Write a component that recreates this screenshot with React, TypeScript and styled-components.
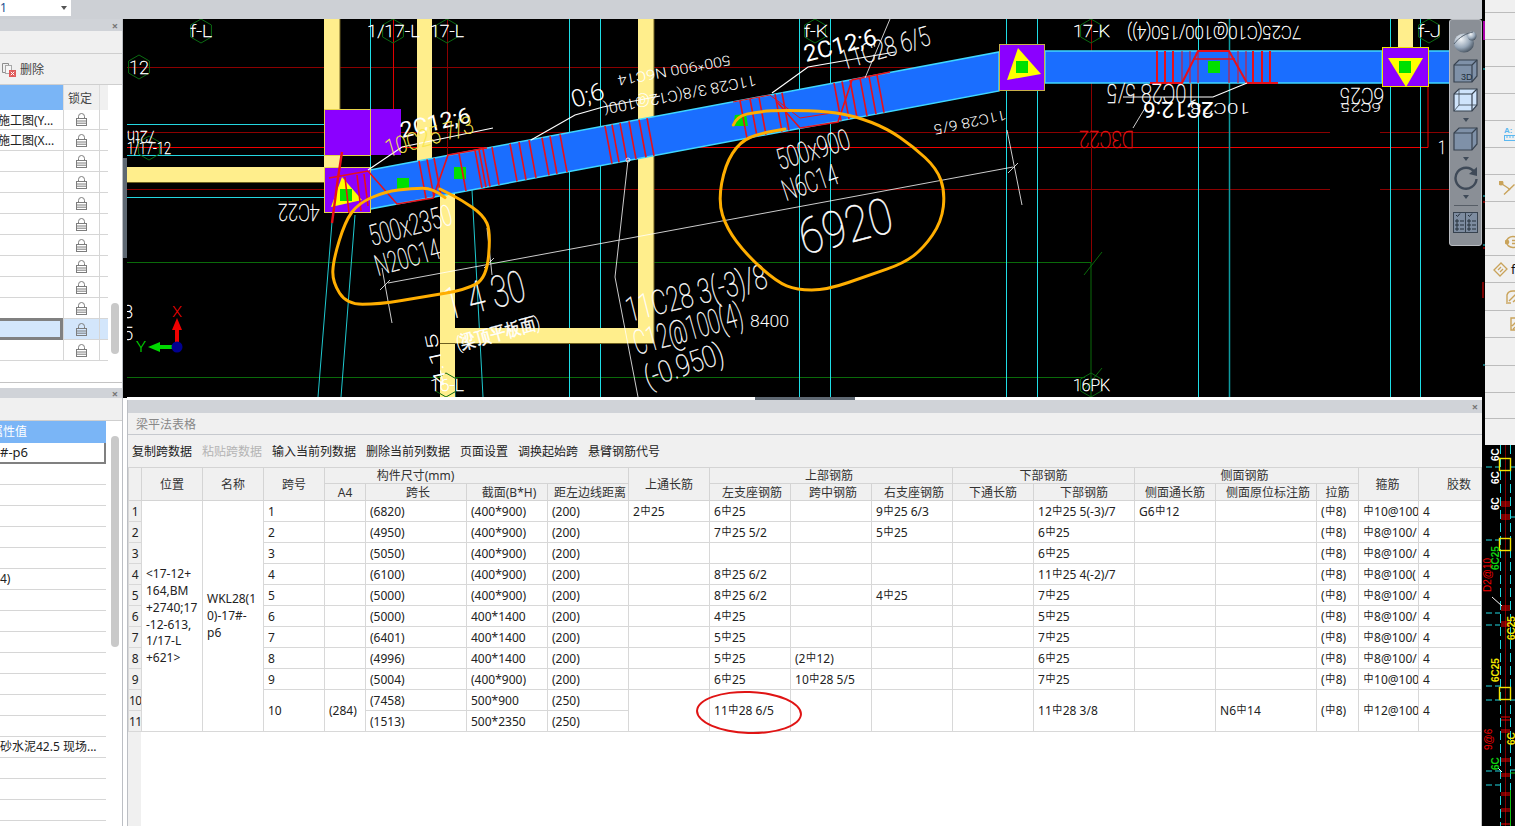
import React from "react";
import styled, { createGlobalStyle } from "styled-components";

const Global = createGlobalStyle`
  html, body { margin: 0; padding: 0; background: #fff; overflow: hidden; }
  * { box-sizing: border-box; }
`;

const FONT = `"Noto Sans", "Noto Sans CJK SC", sans-serif`;

/* ---------- page frame ---------- */
const Page = styled.div`
  display: flex; width: 1515px; height: 826px; overflow: hidden;
  font-family: ${FONT}; font-size: 12px; color: #222; background: #fff;
`;
const MainColumn = styled.div`display: flex; flex-direction: column; width: 1482px; flex: none;`;
const TopBar = styled.div`height: 19px; flex: none; background: #cdd0d5; display: flex; align-items: flex-start;`;
const LevelSelect = styled.div`
  width: 71px; height: 16px; background: #fff; color: #1d4f91; font-size: 12px; line-height: 14px;
  display: flex; justify-content: space-between; align-items: center; padding: 0 4px 0 0;
`;
const Caret = styled.span`
  width: 0; height: 0; border-left: 3px solid transparent; border-right: 3px solid transparent;
  border-top: 4px solid ${(p: { $c?: string }) => p.$c || "#555"};
`;
const Workspace = styled.div`display: flex; flex: 1; min-height: 0;`;

/* ---------- left side ---------- */
const Sidebar = styled.div`
  width: 123px; flex: none; display: flex; flex-direction: column; border-right: 1px solid #bcbfc4; background: #fff;
`;
const DockTitle = styled.div`
  height: ${(p: { $h: number }) => p.$h}px; flex: none; background: #d0d3d8;
  display: flex; justify-content: flex-end; align-items: center; padding-right: 4px;
  color: #777; font-size: 11px; font-weight: 700; line-height: 1;
`;
const Strip = styled.div`
  height: ${(p: { $h: number }) => p.$h}px; flex: none; background: #f0f0f0; border-bottom: 1px solid #cfcfcf;
  display: flex; align-items: center; gap: 4px; padding-left: 1px; color: #444;
`;
const PanelTop = styled.section`height: 364px; flex: none; display: flex; flex-direction: column; border-bottom: 1px solid #c4c4c4; position: relative;`;
const PanelBottom = styled.section`margin-top: 5px; flex: 1; display: flex; flex-direction: column; position: relative;`;
const LayerGrid = styled.div`display: grid; grid-template-columns: 63px 36px 9px; width: 108px;`;
const BlueHead = styled.div`
  background: #7ab5f6; color: #fff; height: 25px; overflow: hidden; white-space: nowrap; line-height: 22px;
`;
const GreyHead = styled.div`
  background: #f0f0f0; height: 25px; border-left: 1px solid #dcdcdc; display: flex; align-items: center; justify-content: center;
  color: #444; padding-right: 3px;
`;
const LayerName = styled.div<{ $sel?: boolean; $first?: boolean }>`
  height: ${(p) => (p.$first ? 20 : 21)}px; border-bottom: 1px solid #d6d6d6; white-space: nowrap; overflow: hidden;
  line-height: 21px; text-indent: -2px;
  ${(p) => p.$sel && "background:#d3e6fb; border:3px solid #808080; border-left:0; margin-top:-1px; height:22px;"}
`;
const LockCell = styled.div<{ $sel?: boolean; $first?: boolean }>`
  height: ${(p) => (p.$first ? 20 : 21)}px; border-bottom: 1px solid #d6d6d6; border-left: 1px solid #d6d6d6;
  display: flex; align-items: center; justify-content: center; padding-right: 1px; ${(p) => p.$sel && "background:#d3e6fb;"}
`;
const TailCell = styled.div<{ $sel?: boolean; $first?: boolean }>`
  height: ${(p) => (p.$first ? 20 : 21)}px; border-bottom: 1px solid #d6d6d6; border-left: 1px solid #d6d6d6;
  ${(p) => p.$sel && "background:#d3e6fb;"}
`;
const Thumb = styled.div<{ $top: number; $h: number }>`
  position: absolute; right: 3px; top: ${(p) => p.$top}px; height: ${(p) => p.$h}px; width: 8px; border-radius: 4px; background: #c9c9c9;
`;
const PropHead = styled.div`
  width: 106px; height: 22px; background: #7ab5f6; color: #fff; overflow: hidden; white-space: nowrap; line-height: 21px; font-size: 12px;
`;
const Clip = styled.span`display: inline-block; margin-left: ${(p: { $m: number }) => p.$m}px;`;
const PropRow = styled.div<{ $active?: boolean }>`
  width: 106px; height: 21px; border-bottom: 1px solid #d6d6d6; white-space: nowrap; overflow: hidden; line-height: 19px; background: #fff;
  ${(p) => p.$active && "border-bottom:2px solid #808080; border-right:2px solid #808080; font-size:13px;"}
`;

const Gutter = styled.div`width: 4px; flex: none; display: flex; flex-direction: column; background: #fff;`;
const GutterDark = styled.div`height: 379px; background: #000; padding-top: 139px;`;
const GutterHandle = styled.div`height: 100px; background: #5e6872;`;

/* ---------- centre ---------- */
const Center = styled.div`flex: 1; min-width: 0; display: flex; flex-direction: column;`;
const CanvasWrap = styled.div`position: relative; height: 378px; flex: none; background: #000; overflow: hidden;`;
const CadSvg = styled.svg`display: block;`;
const SplitRow = styled.div`height: 3px; flex: none; display: flex; justify-content: center; background: #fff;`;
const SplitHandle = styled.div`width: 100px; height: 3px; background: #5e6872;`;
const ViewBar = styled.div`
  position: absolute; right: 0; top: 0; width: 33px; height: 227px; background: #8a8f96; border: 1px solid #b9bcc1; border-radius: 3px;
  display: flex; flex-direction: column; align-items: center; padding-top: 10px;
`;
const ViewIcon = styled.svg<{ $mt?: number }>`display: block; flex: none; margin-top: ${(p) => p.$mt || 0}px;`;
const ViewCaret = styled.span<{ $mt: number }>`
  flex: none; margin-top: ${(p) => p.$mt}px; width: 0; height: 0;
  border-left: 3px solid transparent; border-right: 3px solid transparent; border-top: 4px solid #3f4a58;
`;
const ViewRule = styled.div`flex: none; width: 24px; height: 1px; background: #565d66; margin-top: 6px;`;

const TablePanel = styled.section`flex: 1; min-height: 0; display: flex; flex-direction: column; border-left: 1px solid #bcbfc4;`;
const PanelHeadBar = styled.div`
  height: 13px; flex: none; margin-top: 0; background: #d0d3d8; display: flex; justify-content: flex-end; align-items: center;
  padding-right: 4px; color: #777; font-size: 11px; font-weight: 700; line-height: 1;
`;
const PanelTitle = styled.div`
  height: 22px; flex: none; background: #f0f0f0; border-bottom: 1px solid #c6c9ce; color: #888; display: flex; align-items: center; padding-left: 8px; font-size: 12px;
`;
const ActionBar = styled.div`
  height: 32px; flex: none; background: #f0f0f0; display: flex; align-items: center; gap: 10px; padding: 0 0 0 4px;
`;
const Action = styled.span<{ $off?: boolean }>`color: ${(p) => (p.$off ? "#b4b4b4" : "#222")}; white-space: nowrap;`;
const TableArea = styled.div`
  position: relative; flex: 1; min-height: 0; overflow: hidden; border-right: 1px solid #c4c4c4;
  background: linear-gradient(to right, #f0f0f0 13px, #fff 13px);
`;
const Grid = styled.table`
  table-layout: fixed; border-collapse: collapse; width: 1353px; font-size: 12px;
`;
const Th = styled.th<{ $pl?: number; $pr?: number }>`
  background: #f0f0f0; border: 1px solid #d4d4d4; font-weight: 400; color: #333; text-align: center; white-space: nowrap; overflow: hidden;
  padding: 1px ${(p) => p.$pr || 0}px 0 ${(p) => p.$pl || 0}px; line-height: 14px;
`;
const Td = styled.td<{ $wrap?: boolean }>`
  background: #fff; border: 1px solid #d8d8d8; padding: 1px 0 0 4px; white-space: ${(p) => (p.$wrap ? "normal" : "nowrap")};
  overflow: hidden; line-height: ${(p) => (p.$wrap ? "16.8px" : "14px")}; height: 21px;
`;
const RowNo = styled.td`
  background: #f0f0f0; border: 1px solid #d8d8d8; padding: 1px 0 0; text-align: center; overflow: hidden; white-space: nowrap; letter-spacing: -0.5px; line-height: 14px; height: 21px;
`;
const HeadRow = styled.tr<{ $h: number }>`height: ${(p) => p.$h}px;`;
const Rebar = styled.span`font-size: 10px; position: relative; top: -2px; margin: 0 .5px; font-family: "Noto Sans CJK SC", sans-serif;`;
const RedRing = styled.div`
  position: absolute; left: 568px; top: 224px; width: 106px; height: 43px; border: 2.5px solid #e01414; border-radius: 50%; transform: rotate(2deg);
`;

/* ---------- right rail ---------- */
const Rail = styled.div`width: 33px; flex: none; display: flex; flex-direction: column; background: #000;`;
const RailTop = styled.div`height: 445px; flex: none; display: flex;`;
const RailEdge = styled.svg`display: block; width: 3px; height: 445px; flex: none;`;
const RailList = styled.div`flex: 1; background: #f0f0f0; overflow: hidden;`;
const RailRow = styled.div<{ $h: number; $indent: number }>`
  height: ${(p) => p.$h}px; border-bottom: 1px solid #bcbcbc; display: flex; align-items: center; gap: 3px;
  padding-left: ${(p) => p.$indent}px; white-space: nowrap; font-size: 13px; color: #111; overflow: hidden;
`;
const RailLast = styled.div`height: 27px;`;

const CadLabel = styled.text<{ $weight?: number }>`
  font-family: "Roboto", "Liberation Sans", sans-serif; font-weight: ${(p) => p.$weight || 100};
`;

/* ---------- small drawings ---------- */
const Lock = () => (
  <svg width="11" height="13" viewBox="0 0 11 13" fill="none" stroke="#7d7d7d">
    <path d="M2.5 5V3.5a3 3 0 0 1 6 0V5" />
    <rect x=".5" y="5.5" width="10" height="7" />
    <path d="M1 8h9M1 10.2h9" />
  </svg>
);
const DeleteIcon = () => (
  <svg width="15" height="15" viewBox="0 0 15 15" fill="none">
    <path d="M1.5 1.5h6v2M1.5 1.5v9h3" stroke="#8d8d8d" />
    <rect x="4.5" y="3.5" width="6" height="8" stroke="#a8a8a8" fill="#f6f6f6" />
    <rect x="8" y="8" width="7" height="7" fill="#e05a5a" />
    <path d="M9.8 9.8l3.4 3.4M13.2 9.8l-3.4 3.4" stroke="#fff" />
  </svg>
);

type P = [number, number];
const zp = (ox: number, oy: number, pts: P[]): P[] => pts.map(([x, y]) => [ox + x / 3, oy + y / 3] as P);
const smooth = (pts: P[]) => {
  let d = `M${pts[0][0]} ${pts[0][1]}`;
  for (let i = 1; i < pts.length - 1; i++) {
    const mx = (pts[i][0] + pts[i + 1][0]) / 2;
    const my = (pts[i][1] + pts[i + 1][1]) / 2;
    d += ` Q${pts[i][0]} ${pts[i][1]} ${mx} ${my}`;
  }
  const l = pts[pts.length - 1];
  return d + ` L${l[0]} ${l[1]}`;
};
const poly = (pts: P[]) => pts.map((p) => p.join(",")).join(" ");

const Lbl = ({ a, b, s, c = "#fff", w, children }: { a: P; b: P; s: number; c?: string; w?: number; children: React.ReactNode }) => {
  const dx = b[0] - a[0];
  const dy = b[1] - a[1];
  const deg = (Math.atan2(dy, dx) * 180) / Math.PI;
  return (
    <CadLabel
      x={a[0]}
      y={a[1]}
      fontSize={s}
      fill={c}
      stroke={w ? "none" : c}
      strokeWidth={w ? 0 : 0.4}
      $weight={w}
      transform={`rotate(${deg} ${a[0]} ${a[1]})`}
      textLength={Math.hypot(dx, dy)}
      lengthAdjust="spacingAndGlyphs"
    >
      {children}
    </CadLabel>
  );
};
const Hex = ({ x, y }: { x: number; y: number }) => {
  const pts: P[] = [];
  for (let i = 0; i < 6; i++) {
    const t = (Math.PI / 3) * i + Math.PI / 6;
    pts.push([x + 12 * Math.cos(t), y + 12 * Math.sin(t)]);
  }
  return <polygon points={poly(pts)} fill="none" stroke="#0b6b12" strokeWidth="1" />;
};
const beamTop = (x: number) => 170 - 0.1875 * (x - 370);
const TICKS = [422, 430, 437, 462, 478, 482, 486, 495, 513, 522, 532, 545, 553, 563, 608, 615, 623, 632, 642, 650, 743, 753, 762, 778, 785, 837, 845, 853, 863, 872, 880];
const RIGHT_TICKS = [1157, 1165, 1173, 1253, 1262, 1270];
const THIN_TICKS = [1182, 1190, 1198, 1229, 1238, 1246];

const ORANGE_A = smooth(zp(125, 15, [[960, 548], [925, 520], [860, 520], [780, 530], [700, 565], [660, 620], [625, 735], [622, 800], [665, 868], [760, 868], [900, 845], [1020, 825], [1085, 790], [1097, 650], [1075, 600], [1010, 555], [945, 522]]));
const ORANGE_B = smooth(zp(570, 15, [[490, 330], [500, 305], [560, 290], [650, 285], [780, 290], [860, 305], [950, 340], [1030, 395], [1100, 460], [1125, 530], [1115, 620], [1060, 700], [1000, 745], [900, 780], [770, 825], [680, 825], [620, 800], [530, 720], [470, 640], [445, 560], [465, 450], [510, 380], [570, 355], [645, 342]]));

const CadCanvas = () => (
  <CadSvg width="1355" height="378" viewBox="127 19 1355 378">
    {/* grid lines */}
    <g fill="none" strokeWidth="1">
      <path d="M127 67.5H1450M127 132.5H1330M1380 132.5H1450M127 189.5H1330M1380 189.5H1450" stroke="#8b0000" />
      <path d="M127 147.5H1428V87" stroke="#f00000" />
      <path d="M127 262.5H1091M127 377.5H1085M1091 262V397" stroke="#0a6a0a" />
      <path d="M1084 275L1102 252M1084 390L1102 368" stroke="#0a6a0a" />
      <path d="M393.5 19V147M447.5 19V397M1091.5 19V262" stroke="#8b0000" />
      <path d="M393.5 19V147" stroke="#e00000" />
      <path d="M127 124.5H325M127 155.5H325M127 197.5H325" stroke="#24d6e0" />
      <path d="M370.5 19V212M569.5 19V397M600.5 19V397M799.5 19V397M830.5 19V397M1006.5 19V397M1037.5 19V397M1198.5 19V397M1390.5 19V397M1420.5 19V397" stroke="#1fdde6" />
      <path d="M1229.5 19V397" stroke="#0f9a9f" strokeWidth="1.5" />
      <path d="M332 222L318 397M355 215L341 397M472 190L483 397M448 202L455 397" stroke="#1fc8cf" />
    </g>
    {/* yellow beams */}
    <g fill="#ffee8c">
      <rect x="324" y="19" width="16" height="150" />
      <rect x="417" y="19" width="15" height="145" />
      <rect x="127" y="167" width="198" height="15" />
      <rect x="440" y="190" width="15" height="207" />
      <rect x="440" y="328" width="214" height="15" />
      <rect x="638" y="19" width="16" height="324" />
      <rect x="1398" y="19" width="15" height="30" />
    </g>
    <path d="M127 182.5H325M440 343.5H654M654 19V343M340 19V110" stroke="#6c5f20" strokeWidth="1" fill="none" />
    {/* blue beams */}
    <g stroke="#3fd8ff" strokeWidth="1.5" fill="#1a6eff">
      <polygon points="370,170 999,52 999,91 370,209" />
      <rect x="1045" y="51" width="337" height="32" />
      <rect x="1428" y="51" width="30" height="32" />
    </g>
    {/* columns */}
    <rect x="324.5" y="109.5" width="46" height="46" fill="#8b00ff" stroke="#e6d24a" />
    <rect x="371" y="109" width="30" height="46" fill="#8b00ff" />
    <rect x="324.5" y="167.5" width="46" height="45" fill="#8b00ff" stroke="#e6d24a" />
    <rect x="999.5" y="44.5" width="45" height="46" fill="#8b00ff" stroke="#c9b04a" />
    <rect x="1382.5" y="47.5" width="46" height="39" fill="#8b00ff" stroke="#f3e200" />
    <g fill="#ffff00">
      <polygon points="342,177 362,200 331,207" />
      <polygon points="1018,48 1041,74 1007,80" />
      <polygon points="1388,58 1423,58 1406,87" />
    </g>
    <g fill="#00e000">
      <rect x="340" y="189" width="12" height="12" />
      <rect x="397" y="178" width="12" height="12" />
      <rect x="454" y="167" width="12" height="12" />
      <rect x="1016" y="61" width="12" height="12" />
      <rect x="1208" y="61" width="12" height="12" />
      <rect x="1399" y="61" width="12" height="12" />
      <polygon points="735,115 746,114 748,126 733,126" />
    </g>
    {/* rebar */}
    <g stroke="#e8101a" strokeWidth="1.6" fill="none">
      {TICKS.map((x) => (
        <line key={x} x1={x - 3} y1={beamTop(x - 3)} x2={x + 4} y2={beamTop(x + 4) + 39} />
      ))}
      <path d="M329 178L368 171L397 204L433 198L448 155L487 148" />
      <path d="M777 102L800 128L838 122L852 80L890 72" />
      <path d="M733 102L770 95L800 118L838 112" strokeWidth="1" />
      <path d="M342 152L338 178L332 223" strokeWidth="2.4" />
      <path d="M345 177L349 213M357 175L361 211M364 174L368 206" />
      {RIGHT_TICKS.map((x) => (
        <line key={x} x1={x} y1={51} x2={x} y2={83} strokeWidth="2" />
      ))}
      {THIN_TICKS.map((x) => (
        <line key={x} x1={x} y1={51} x2={x} y2={83} strokeWidth="1" />
      ))}
      <path d="M1150 83H1182L1198 51H1229L1247 83H1278" strokeWidth="2" />
      <path d="M1193 59H1235" />
    </g>
    {/* leaders */}
    <g fill="none" stroke="#fff" strokeWidth="1.2">
      <path d="M368 170L402 147L493 128" />
      <path d="M531 140L575 115L603 107L660 96" />
      <path d="M772 93L808 67L895 52" />
      <path d="M1123 97H1213L1247 83" />
      <g strokeWidth=".8">
        <path d="M388 283L1013 167" />
        <path d="M1007 130L1022 205M382 268L392 323M487 228L492 275" />
        <path d="M628 160L615 277L638 397" />
        <path d="M890 19L865 78M1133 128L1145 108" />
        <circle cx="628" cy="160" r="2" />
        <path d="M1008 173l10-10M380 290l10-10M484 268l10-10" />
      </g>
    </g>
    {/* labels */}
    <Hex x={201} y={31} /><Hex x={139} y={67} /><Hex x={393} y={31} /><Hex x={447} y={31} />
    <Hex x={815} y={31} /><Hex x={1091} y={31} /><Hex x={1429} y={31} /><Hex x={149} y={148} /><Hex x={446} y={385} /><Hex x={1091} y={385} />
    <Lbl a={[190, 37]} b={[212, 37]} s={17}>f-L</Lbl>
    <Lbl a={[129, 74]} b={[149, 74]} s={19}>12</Lbl>
    <Lbl a={[367, 37]} b={[420, 37]} s={17}>1/17-L</Lbl>
    <Lbl a={[430, 37]} b={[464, 37]} s={17}>17-L</Lbl>
    <Lbl a={[804, 37]} b={[828, 37]} s={17}>f-K</Lbl>
    <Lbl a={[1073, 37]} b={[1110, 37]} s={17}>17-K</Lbl>
    <Lbl a={[1418, 37]} b={[1441, 37]} s={17}>f-J</Lbl>
    <Lbl a={[1301, 26]} b={[1127, 26]} s={18}>7C25(C10@100/150(4))</Lbl>
    <Lbl a={[127, 154]} b={[171, 154]} s={17}>1/17-12</Lbl>
    <Lbl a={[156, 131]} b={[127, 131]} s={17}>72th</Lbl>
    <Lbl a={[320, 204]} b={[278, 204]} s={24}>4C22</Lbl>
    <Lbl a={[402, 138]} b={[472, 122]} s={22} w={400}>2C12;6</Lbl>
    <Lbl a={[388, 157]} b={[475, 132]} s={24} c="#f7e64a">10C25 7/3</Lbl>
    <Lbl a={[372, 246]} b={[454, 224]} s={29}>500x2350</Lbl>
    <Lbl a={[378, 276]} b={[442, 258]} s={29}>N20C14</Lbl>
    <Lbl a={[448, 320]} b={[528, 300]} s={44}>1 4 30</Lbl>
    <Lbl a={[458, 350]} b={[541, 328]} s={18}>(梁顶平板面)</Lbl>
    <Lbl a={[447, 385]} b={[436, 333]} s={16}>4.15</Lbl>
    <Lbl a={[430, 391]} b={[464, 391]} s={16}>16-L</Lbl>
    <Lbl a={[123, 318]} b={[133, 318]} s={18}>3</Lbl>
    <Lbl a={[123, 340]} b={[133, 340]} s={18}>5</Lbl>
    <Lbl a={[574, 108]} b={[606, 98]} s={24} w={300}>0;6</Lbl>
    <Lbl a={[730, 55]} b={[617, 76]} s={14} w={300}>500*900 N6C14</Lbl>
    <Lbl a={[755, 75]} b={[603, 104]} s={15} w={300}>11C28 3/8(C12@100(</Lbl>
    <Lbl a={[806, 62]} b={[878, 44]} s={23} w={400}>2C12;6</Lbl>
    <Lbl a={[843, 70]} b={[932, 44]} s={27}>11C28 6/5</Lbl>
    <Lbl a={[1005, 110]} b={[933, 125]} s={14} w={300}>11C28 6/5</Lbl>
    <Lbl a={[780, 170]} b={[852, 148]} s={29}>500x900</Lbl>
    <Lbl a={[786, 201]} b={[840, 183]} s={29}>N6C14</Lbl>
    <Lbl a={[804, 255]} b={[896, 231]} s={50}>6920</Lbl>
    <Lbl a={[629, 322]} b={[769, 287]} s={34}>11C28 3(-3)/8</Lbl>
    <Lbl a={[637, 355]} b={[745, 325]} s={34}>C12@100(4)</Lbl>
    <Lbl a={[750, 327]} b={[789, 327]} s={17} w={300}>8400</Lbl>
    <Lbl a={[648, 388]} b={[726, 362]} s={30}>(-0.950)</Lbl>
    <Lbl a={[1197, 84]} b={[1107, 84]} s={26}>10C28 5/5</Lbl>
    <Lbl a={[1250, 103]} b={[1190, 103]} s={14} w={300}>10C28</Lbl>
    <Lbl a={[1214, 102]} b={[1143, 102]} s={22} w={400}>2C12:6</Lbl>
    <Lbl a={[1134, 131]} b={[1079, 131]} s={24} c="#e81010">D3C22</Lbl>
    <Lbl a={[1384, 88]} b={[1340, 88]} s={22}>6C25</Lbl>
    <Lbl a={[1381, 103]} b={[1341, 103]} s={12} w={300}>6C25</Lbl>
    <Lbl a={[1438, 154]} b={[1446, 154]} s={18}>1</Lbl>
    <Lbl a={[1073, 391]} b={[1110, 391]} s={16}>16PK</Lbl>
    {/* axis */}
    <Lbl a={[172, 317]} b={[182, 317]} s={15} c="#f00000" w={300}>X</Lbl>
    <Lbl a={[136, 352]} b={[146, 352]} s={15} c="#00e000" w={300}>Y</Lbl>
    <rect x="175" y="328" width="4" height="19" fill="#f00000" />
    <polygon points="177,318 182,330 172,330" fill="#f00000" />
    <rect x="158" y="345" width="19" height="4" fill="#00d800" />
    <polygon points="148,347 160,342 160,352" fill="#00d800" />
    <circle cx="177" cy="347" r="5.5" fill="#000090" />
    {/* hand marks */}
    <g fill="none" stroke="#ffae00" strokeWidth="3" strokeLinecap="round">
      <path d={ORANGE_A} />
      <path d={ORANGE_B} />
    </g>
  </CadSvg>
);

/* ---------- view toolbar icons ---------- */
const Sphere = () => (
  <ViewIcon width="25" height="23" viewBox="0 0 25 23">
    <defs>
      <radialGradient id="sph" cx="35%" cy="30%" r="75%">
        <stop offset="0" stopColor="#f2f5f8" />
        <stop offset=".6" stopColor="#97a7b8" />
        <stop offset="1" stopColor="#46525f" />
      </radialGradient>
    </defs>
    <ellipse cx="11" cy="13" rx="10" ry="9.5" fill="url(#sph)" />
    <circle cx="19" cy="6" r="4.5" fill="url(#sph)" />
    <path d="M1 14C6 7 14 3 20 2" stroke="#56626f" fill="none" />
  </ViewIcon>
);
const Cube = ({ fill, wire, label, mt }: { fill: string; wire?: boolean; label?: boolean; mt: number }) => (
  <ViewIcon width="25" height="24" viewBox="0 0 25 24" $mt={mt}>
    <polygon points="6,1 24,1 24,17 19,23 1,23 1,6" fill={fill} stroke="#37424f" strokeWidth="1.2" />
    <path d="M1 6H19V23M19 6L24 1" stroke="#37424f" strokeWidth="1.2" fill="none" />
    {wire && <path d="M6 1V17H24M6 17L1 23" stroke="#37424f" strokeWidth=".8" fill="none" />}
    {label && (
      <text x="8" y="21" fontSize="9" fill="#22303d" fontFamily="Liberation Sans, sans-serif">
        3D
      </text>
    )}
  </ViewIcon>
);
const Rotate = () => (
  <ViewIcon width="24" height="24" viewBox="0 0 24 24" $mt={5}>
    <path d="M20.5 6A10.5 10.5 0 1 0 22.5 13" fill="none" stroke="#3f4a58" strokeWidth="2.4" />
    <polygon points="23,1 23,10 15,8" fill="#3f4a58" />
  </ViewIcon>
);
const CheckList = () => (
  <ViewIcon width="25" height="23" viewBox="0 0 25 23" $mt={4}>
    <rect x=".5" y="2.5" width="24" height="20" fill="#7d8ca0" stroke="#37424f" />
    <path d="M12.5 3V22" stroke="#37424f" />
    <g stroke="#26303b" fill="none">
      <path d="M3 5l1.5 1.5L7 3.5M15 5l1.5 1.5L19 3.5" />
      <path d="M3 10h2v2H3zM3 14h2v2H3zM3 18h2v2H3zM15 10h2v2h-2zM15 14h2v2h-2zM15 18h2v2h-2z" />
      <path d="M7 11h4M7 15h4M7 19h4M19 11h4M19 15h4M19 19h4" />
    </g>
  </ViewIcon>
);

/* ---------- rail icons ---------- */
const GOLD = "#c9a35a";
const RulerIcon = () => (
  <svg width="14" height="14" viewBox="0 0 14 14" fill="none" stroke="#5cb8f0" style={{ flex: "none" }}>
    <text x="0" y="6" fontSize="8" fontWeight="700" fill="#5cb8f0" stroke="none" fontFamily="Liberation Sans, sans-serif">A:</text>
    <rect x=".5" y="8.5" width="14" height="5" />
    <path d="M3 9v2M6 9v2M9 9v2M12 9v2" />
  </svg>
);
const AngleIcon = () => (
  <svg width="16" height="15" viewBox="0 0 16 15" fill="none" stroke={GOLD} strokeWidth="1.4" style={{ flex: "none" }}>
    <circle cx="2" cy="2" r="1.8" fill={GOLD} />
    <path d="M3 3L9 7M15.5 3.5L5 13.5" />
    <path d="M9 7L11 9" />
  </svg>
);
const StampIcon = () => (
  <svg width="14" height="14" viewBox="0 0 14 14" fill="none" stroke={GOLD} strokeWidth="1.5" style={{ flex: "none" }}>
    <ellipse cx="8" cy="7" rx="6.5" ry="5.5" />
    <circle cx="2" cy="7" r="1.6" fill={GOLD} />
    <path d="M7 5.5h5M7 8.5h5" />
  </svg>
);
const TagIcon = () => (
  <svg width="15" height="15" viewBox="0 0 15 15" fill="none" stroke={GOLD} strokeWidth="1.3" style={{ flex: "none" }}>
    <path d="M1 8L8 1L14 7L7 14Z" />
    <path d="M5 8L8 5M7 10L10 7" />
  </svg>
);
const HatchIcon = () => (
  <svg width="16" height="14" viewBox="0 0 16 14" fill="none" stroke={GOLD} strokeWidth="1.4" style={{ flex: "none" }}>
    <path d="M2 12V5Q3 1 8 1H16" />
    <path d="M4 11L13 2M8 12L16 5" />
    <path d="M1 13H6" />
  </svg>
);
const SheetIcon = () => (
  <svg width="8" height="14" viewBox="0 0 8 14" fill="none" stroke={GOLD} strokeWidth="1.4" style={{ flex: "none" }}>
    <path d="M8 1H1V13H8M2 9L7 4M3 12L8 8" />
  </svg>
);

const RailEdgeMarks = () => (
  <RailEdge viewBox="0 0 3 445">
    <rect width="3" height="445" fill="#000" />
    <path d="M2 21V40" stroke="#e000e0" strokeWidth="1.5" />
    <path d="M1 69H3M1 196H3M1 245H3" stroke="#22d8e0" />
    <path d="M1 202H3M1 248H3M1 282V298" stroke="#f00000" />
    <path d="M1 365H3" stroke="#22d8e0" />
  </RailEdge>
);

const RAIL_ROWS: { h: number; indent: number; icon?: React.ReactNode; text?: string }[] = [
  { h: 13, indent: 0 }, { h: 27, indent: 0 }, { h: 27, indent: 0 }, { h: 27, indent: 0 }, { h: 27, indent: 0 },
  { h: 27, indent: 19, icon: <RulerIcon /> },
  { h: 27, indent: 0 },
  { h: 27, indent: 14, icon: <AngleIcon /> },
  { h: 27, indent: 0 },
  { h: 27, indent: 20, icon: <StampIcon /> },
  { h: 27, indent: 8, icon: <TagIcon />, text: "f" },
  { h: 28, indent: 20, icon: <HatchIcon /> },
  { h: 27, indent: 25, icon: <SheetIcon /> },
  { h: 28, indent: 0 }, { h: 27, indent: 0 }, { h: 26, indent: 0 },
];

const RailCad = () => (
  <CadSvg width="33" height="381" viewBox="1482 445 33 381">
    <path d="M1505.5 445V826" stroke="#7a0000" />
    <path d="M1500.5 445V826M1510.5 445V826" stroke="#20d8e0" strokeDasharray="9 4" />
    <path d="M1486 467H1500M1486 540H1500M1486 613H1500M1486 625H1500M1486 686H1500M1486 700H1500M1486 771H1500M1486 785H1500M1510 467H1515M1510 517H1515M1510 700H1515M1510 770H1515" stroke="#20d8e0" strokeDasharray="6 3" />
    <g fill="none" stroke="#f2e400" strokeWidth="1.4">
      <rect x="1499.5" y="458.5" width="11" height="12" />
      <rect x="1499.5" y="538.5" width="11" height="12" />
      <rect x="1499.5" y="687.5" width="11" height="12" />
    </g>
    <path d="M1501 502H1510M1501 504H1510M1501 506H1510M1501 515H1510M1501 517H1510M1501 519H1510M1501 606H1510M1501 608H1510M1501 610H1510M1501 622H1510M1501 624H1510M1501 626H1510M1501 717H1510M1501 720H1510M1501 730H1510M1501 732H1510M1501 759H1510M1501 761H1510M1501 774H1510M1501 776H1510M1501 793H1510M1501 795H1510M1501 809H1510M1501 811H1510M1501 824H1510" stroke="#f00000" />
    <path d="M1492 597L1502 606M1498 768L1502 772" stroke="#fff" />
    <path d="M1510.5 790V826M1510 773H1515" stroke="#10c010" />
    <g fontFamily="Liberation Sans, sans-serif" fontSize="10">
      <text transform="rotate(-90 1491 592)" x="1491" y="592" fill="#f00000">D2@10</text>
      <text transform="rotate(-90 1492 750)" x="1492" y="750" fill="#f00000">9@6</text>
      <text transform="rotate(-90 1499 570)" x="1499" y="570" fill="#10d010" fontWeight="700">6C25</text>
      <text transform="rotate(-90 1499 682)" x="1499" y="682" fill="#f2e400" fontWeight="700">6C25</text>
      <text transform="rotate(-90 1499 770)" x="1499" y="770" fill="#10d010" fontWeight="700">6C</text>
      <text transform="rotate(-90 1499 461)" x="1499" y="461" fill="#fff" fontWeight="700">6C</text>
      <text transform="rotate(-90 1499 484)" x="1499" y="484" fill="#fff" fontWeight="700">6C</text>
      <text transform="rotate(-90 1499 510)" x="1499" y="510" fill="#fff" fontWeight="700">6C</text>
      <text transform="rotate(-90 1515 640)" x="1515" y="640" fill="#f2e400" fontWeight="700">6C25</text>
      <text transform="rotate(-90 1515 745)" x="1515" y="745" fill="#f2e400" fontWeight="700">6C</text>
    </g>
  </CadSvg>
);

/* ---------- table data ---------- */
const rich = (s: string) =>
  s.split("^").map((part, i) => (
    <React.Fragment key={i}>
      {i > 0 && <Rebar>中</Rebar>}
      {part}
    </React.Fragment>
  ));

const WIDTHS = [13, 61, 61, 61, 41, 101, 81, 81, 81, 81, 81, 81, 81, 101, 81, 101, 42, 60, 63];

const SPANS: string[][] = [
  ["1", "(6820)", "(400*900)", "(200)", "2^25", "6^25", "", "9^25 6/3", "", "12^25 5(-3)/7", "G6^12", "", "(^8)", "^10@100", "4"],
  ["2", "(4950)", "(400*900)", "(200)", "", "7^25 5/2", "", "5^25", "", "6^25", "", "", "(^8)", "^8@100/", "4"],
  ["3", "(5050)", "(400*900)", "(200)", "", "", "", "", "", "6^25", "", "", "(^8)", "^8@100/", "4"],
  ["4", "(6100)", "(400*900)", "(200)", "", "8^25 6/2", "", "", "", "11^25 4(-2)/7", "", "", "(^8)", "^8@100(", "4"],
  ["5", "(5000)", "(400*900)", "(200)", "", "8^25 6/2", "", "4^25", "", "7^25", "", "", "(^8)", "^8@100/", "4"],
  ["6", "(5000)", "400*1400", "(200)", "", "4^25", "", "", "", "5^25", "", "", "(^8)", "^8@100/", "4"],
  ["7", "(6401)", "400*1400", "(200)", "", "5^25", "", "", "", "7^25", "", "", "(^8)", "^8@100/", "4"],
  ["8", "(4996)", "400*1400", "(200)", "", "5^25", "(2^12)", "", "", "6^25", "", "", "(^8)", "^8@100/", "4"],
  ["9", "(5004)", "(400*900)", "(200)", "", "6^25", "10^28 5/5", "", "", "7^25", "", "", "(^8)", "^10@100", "4"],
];

const BeamTable = () => (
  <Grid>
    <colgroup>
      {WIDTHS.map((w, i) => (
        <col key={i} style={{ width: w }} />
      ))}
    </colgroup>
    <thead>
      <HeadRow $h={16}>
        <Th rowSpan={2} />
        <Th rowSpan={2}>位置</Th>
        <Th rowSpan={2}>名称</Th>
        <Th rowSpan={2}>跨号</Th>
        <Th colSpan={4} $pr={122}>构件尺寸(mm)</Th>
        <Th rowSpan={2}>上通长筋</Th>
        <Th colSpan={3} $pr={4}>上部钢筋</Th>
        <Th colSpan={2}>下部钢筋</Th>
        <Th colSpan={3} $pr={4}>侧面钢筋</Th>
        <Th rowSpan={2} $pr={2}>箍筋</Th>
        <Th rowSpan={2} $pl={18}>胶数</Th>
      </HeadRow>
      <HeadRow $h={17}>
        <Th>A4</Th>
        <Th $pl={4}>跨长</Th>
        <Th $pl={4}>截面(B*H)</Th>
        <Th $pl={4}>距左边线距离</Th>
        <Th $pl={4}>左支座钢筋</Th>
        <Th $pl={4}>跨中钢筋</Th>
        <Th $pl={4}>右支座钢筋</Th>
        <Th>下通长筋</Th>
        <Th>下部钢筋</Th>
        <Th>侧面通长筋</Th>
        <Th $pl={4}>侧面原位标注筋</Th>
        <Th>拉筋</Th>
      </HeadRow>
    </thead>
    <tbody>
      {SPANS.map((r, i) => (
        <tr key={r[0]}>
          <RowNo>{r[0]}</RowNo>
          {i === 0 && (
            <>
              <Td rowSpan={11} $wrap>
                &lt;17-12+<br />164,BM<br />+2740;17<br />-12-613,<br />1/17-L<br />+621&gt;
              </Td>
              <Td rowSpan={11} $wrap>
                WKL28(1<br />0)-17#-<br />p6
              </Td>
            </>
          )}
          <Td>{r[0]}</Td>
          <Td />
          <Td>{r[1]}</Td>
          <Td>{r[2]}</Td>
          <Td>{r[3]}</Td>
          {r.slice(4).map((v, k) => (
            <Td key={k}>{rich(v)}</Td>
          ))}
        </tr>
      ))}
      <tr>
        <RowNo>10</RowNo>
        <Td rowSpan={2}>10</Td>
        <Td rowSpan={2}>(284)</Td>
        <Td>(7458)</Td>
        <Td>500*900</Td>
        <Td>(250)</Td>
        <Td rowSpan={2} />
        <Td rowSpan={2}>{rich("11^28 6/5")}</Td>
        <Td rowSpan={2} />
        <Td rowSpan={2} />
        <Td rowSpan={2} />
        <Td rowSpan={2}>{rich("11^28 3/8")}</Td>
        <Td rowSpan={2} />
        <Td rowSpan={2}>{rich("N6^14")}</Td>
        <Td rowSpan={2}>{rich("(^8)")}</Td>
        <Td rowSpan={2}>{rich("^12@100")}</Td>
        <Td rowSpan={2}>4</Td>
      </tr>
      <tr>
        <RowNo>11</RowNo>
        <Td>(1513)</Td>
        <Td>500*2350</Td>
        <Td>(250)</Td>
      </tr>
    </tbody>
  </Grid>
);

const LAYERS = Array.from({ length: 12 }, (_, i) => (i === 0 ? "施工图(Y..." : i === 1 ? "施工图(X..." : ""));
const PROPS: Record<number, string> = { 5: "4)", 13: "砂水泥42.5  现场..." };

export default function App() {
  return (
    <Page>
      <Global />
      <MainColumn>
        <TopBar>
          <LevelSelect>
            <span>1</span>
            <Caret />
          </LevelSelect>
        </TopBar>
        <Workspace>
          <Sidebar>
            <PanelTop>
              <DockTitle $h={12}>×</DockTitle>
              <Strip $h={23} />
              <Strip $h={31}>
                <DeleteIcon />
                <span>删除</span>
              </Strip>
              <LayerGrid>
                <BlueHead />
                <GreyHead>锁定</GreyHead>
                <GreyHead />
                {LAYERS.map((n, i) => (
                  <React.Fragment key={i}>
                    <LayerName $sel={i === 10} $first={i === 0}>{n}</LayerName>
                    <LockCell $sel={i === 10} $first={i === 0}><Lock /></LockCell>
                    <TailCell $sel={i === 10} $first={i === 0} />
                  </React.Fragment>
                ))}
              </LayerGrid>
              <Thumb $top={284} $h={51} />
            </PanelTop>
            <PanelBottom>
              <DockTitle $h={10}>×</DockTitle>
              <Strip $h={23} />
              <PropHead><Clip $m={-9}>属性值</Clip></PropHead>
              <PropRow $active>#-p6</PropRow>
              {Array.from({ length: 18 }, (_, i) => (
                <PropRow key={i}>{PROPS[i] || ""}</PropRow>
              ))}
              <Thumb $top={48} $h={211} />
            </PanelBottom>
          </Sidebar>
          <Gutter>
            <GutterDark>
              <GutterHandle />
            </GutterDark>
          </Gutter>
          <Center>
            <CanvasWrap>
              <CadCanvas />
              <ViewBar>
                <Sphere />
                <Cube fill="#7f91a8" label mt={6} />
                <Cube fill="#cfe4fb" wire mt={5} />
                <ViewCaret $mt={6} />
                <Cube fill="#7f91a8" mt={5} />
                <ViewCaret $mt={6} />
                <Rotate />
                <ViewCaret $mt={5} />
                <ViewRule />
                <CheckList />
              </ViewBar>
            </CanvasWrap>
            <SplitRow>
              <SplitHandle />
            </SplitRow>
            <TablePanel>
              <PanelHeadBar>×</PanelHeadBar>
              <PanelTitle>梁平法表格</PanelTitle>
              <ActionBar>
                <Action>复制跨数据</Action>
                <Action $off>粘贴跨数据</Action>
                <Action>输入当前列数据</Action>
                <Action>删除当前列数据</Action>
                <Action>页面设置</Action>
                <Action>调换起始跨</Action>
                <Action>悬臂钢筋代号</Action>
              </ActionBar>
              <TableArea>
                <BeamTable />
                <RedRing />
              </TableArea>
            </TablePanel>
          </Center>
        </Workspace>
      </MainColumn>
      <Rail>
        <RailTop>
          <RailEdgeMarks />
          <RailList>
            {RAIL_ROWS.map((r, i) => (
              <RailRow key={i} $h={r.h} $indent={r.indent}>
                {r.icon}
                {r.text}
              </RailRow>
            ))}
            <RailLast />
          </RailList>
        </RailTop>
        <RailCad />
      </Rail>
    </Page>
  );
}
